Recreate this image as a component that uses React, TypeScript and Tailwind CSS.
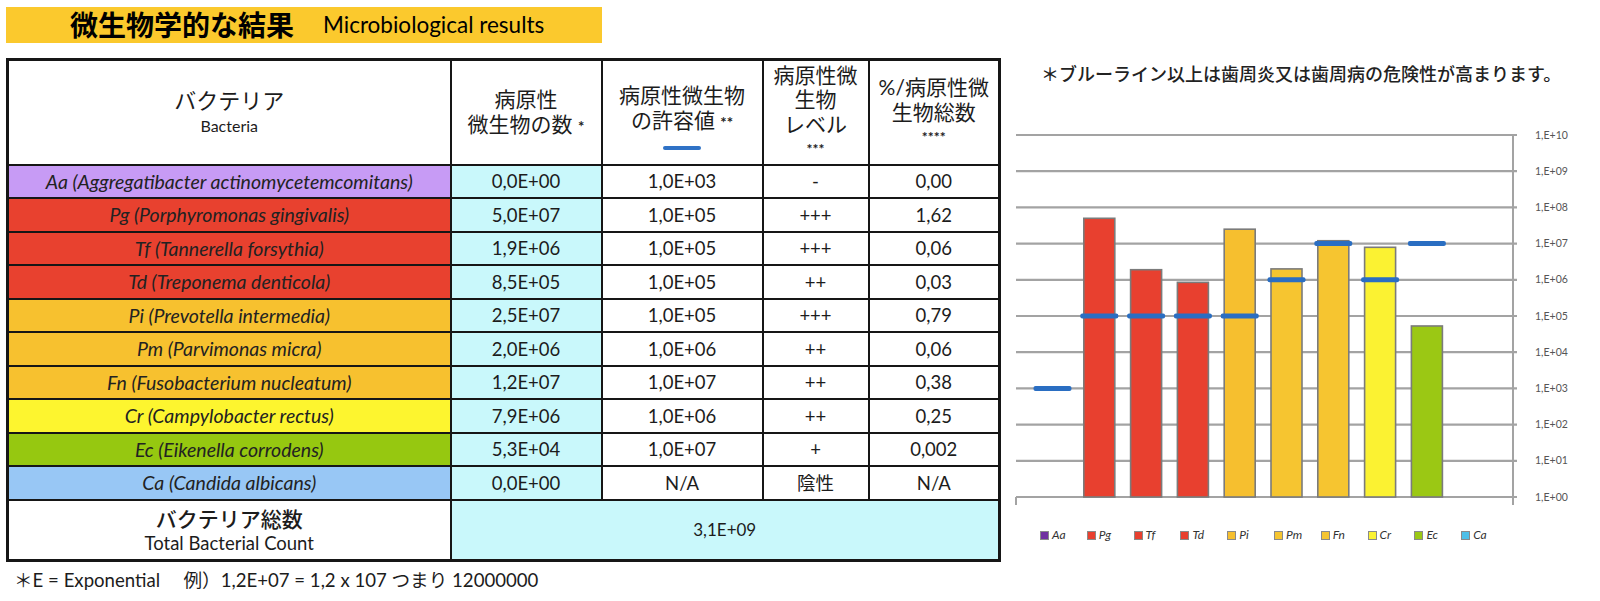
import React from "react";

interface Bacteria {
  abbr: string;
  name: string;
  rowBg: string;
  barColor: string;
  legendColor: string;
  count: string;
  limit: string;
  level: string;
  pct: string;
  value: number;
  threshold: number | null;
}

const bacterias: Bacteria[] = [
  { abbr: "Aa", name: "Aggregatibacter actinomycetemcomitans", rowBg: "bg-[#c79bf5]", barColor: "#7030a0", legendColor: "bg-[#7030a0]", count: "0,0E+00", limit: "1,0E+03", level: "-", pct: "0,00", value: 0, threshold: 1e3 },
  { abbr: "Pg", name: "Porphyromonas gingivalis", rowBg: "bg-[#e8412f]", barColor: "#e8402f", legendColor: "bg-[#e8402f]", count: "5,0E+07", limit: "1,0E+05", level: "+++", pct: "1,62", value: 5e7, threshold: 1e5 },
  { abbr: "Tf", name: "Tannerella forsythia", rowBg: "bg-[#e8412f]", barColor: "#e8402f", legendColor: "bg-[#e8402f]", count: "1,9E+06", limit: "1,0E+05", level: "+++", pct: "0,06", value: 1.9e6, threshold: 1e5 },
  { abbr: "Td", name: "Treponema denticola", rowBg: "bg-[#e8412f]", barColor: "#e8402f", legendColor: "bg-[#e8402f]", count: "8,5E+05", limit: "1,0E+05", level: "++", pct: "0,03", value: 8.5e5, threshold: 1e5 },
  { abbr: "Pi", name: "Prevotella intermedia", rowBg: "bg-[#f7c12f]", barColor: "#f6bf2f", legendColor: "bg-[#f6bf2f]", count: "2,5E+07", limit: "1,0E+05", level: "+++", pct: "0,79", value: 2.5e7, threshold: 1e5 },
  { abbr: "Pm", name: "Parvimonas micra", rowBg: "bg-[#f7c12f]", barColor: "#f6c530", legendColor: "bg-[#f6c530]", count: "2,0E+06", limit: "1,0E+06", level: "++", pct: "0,06", value: 2e6, threshold: 1e6 },
  { abbr: "Fn", name: "Fusobacterium nucleatum", rowBg: "bg-[#f7c12f]", barColor: "#f6c530", legendColor: "bg-[#f6c530]", count: "1,2E+07", limit: "1,0E+07", level: "++", pct: "0,38", value: 1.2e7, threshold: 1e7 },
  { abbr: "Cr", name: "Campylobacter rectus", rowBg: "bg-[#fdf52f]", barColor: "#fbf232", legendColor: "bg-[#fbf232]", count: "7,9E+06", limit: "1,0E+06", level: "++", pct: "0,25", value: 7.9e6, threshold: 1e6 },
  { abbr: "Ec", name: "Eikenella corrodens", rowBg: "bg-[#96c810]", barColor: "#9bc814", legendColor: "bg-[#9bc814]", count: "5,3E+04", limit: "1,0E+07", level: "+", pct: "0,002", value: 5.3e4, threshold: 1e7 },
  { abbr: "Ca", name: "Candida albicans", rowBg: "bg-[#98c7f5]", barColor: "#4dbfe8", legendColor: "bg-[#4dbfe8]", count: "0,0E+00", limit: "N/A", level: "陰性", pct: "N/A", value: 0, threshold: null },
];

// chart geometry (px inside the chart box, box starts at x=1000)
const GRID_TOP = 49;
const GRID_STEP = 36.2;
const GRID_LEFT = 16;
const GRID_RIGHT = 513;
const GRID_BOTTOM = GRID_TOP + GRID_STEP * 10;
const yOf = (v: number) => GRID_TOP + GRID_STEP * (10 - Math.log10(v));
const centerOf = (i: number) => 52.5 + 46.8 * i;

const cell = "border-2 border-[#161616] text-center p-0";

const Chart = () => {
  const ticks = Array.from({ length: 11 }, (_, k) => 10 - k);
  return (
    <svg width={600} height={420} className="block">
      {ticks.map((k) => {
        const y = GRID_TOP + GRID_STEP * (10 - k);
        return (
          <g key={k}>
            <line x1={GRID_LEFT} x2={GRID_RIGHT + 4} y1={y} y2={y} stroke="#a3a3a3" strokeWidth={2.2} />
            <text x={535} y={y + 3.5} fontSize={10.5} fill="#555" fontFamily="Lato, sans-serif">
              {`1,E+${String(k).padStart(2, "0")}`}
            </text>
          </g>
        );
      })}
      <line x1={GRID_RIGHT} x2={GRID_RIGHT} y1={GRID_TOP} y2={GRID_BOTTOM + 8} stroke="#a3a3a3" strokeWidth={2} />
      <line x1={GRID_LEFT} x2={GRID_LEFT} y1={GRID_BOTTOM} y2={GRID_BOTTOM + 8} stroke="#a3a3a3" strokeWidth={2} />
      {bacterias.map((b, i) =>
        b.value > 1 ? (
          <rect
            key={b.abbr}
            x={centerOf(i) - 15.5}
            y={yOf(b.value)}
            width={31}
            height={GRID_BOTTOM - yOf(b.value)}
            fill={b.barColor}
            stroke="#7b7b7b"
            strokeWidth={1.6}
          />
        ) : null
      )}
      {bacterias.map((b, i) =>
        b.threshold ? (
          <rect
            key={b.abbr + "-t"}
            x={centerOf(i) - 19}
            y={yOf(b.threshold) - 2.5}
            width={38}
            height={5}
            rx={2}
            fill="#2a6ec2"
          />
        ) : null
      )}
    </svg>
  );
};

const App = () => {
  return (
    <div className="w-[1600px] h-[601px] bg-white flex overflow-hidden font-[Lato,'Noto_Sans_CJK_JP',sans-serif] text-[#1c1c1c]">
      {/* left: title + table */}
      <div className="w-[1000px] pl-[6px] pt-[7px]">
        <div className="w-[596px] h-[36px] bg-[#fbc92d] flex items-center pl-[64px] gap-[29px]">
          <span className="text-[28px] font-bold leading-none text-black">微生物学的な結果</span>
          <span className="text-[22.5px] leading-none text-black">Microbiological results</span>
        </div>

        <table className="mt-[15px] w-[992px] table-fixed border-collapse border-[3px] border-[#161616]">
          <colgroup>
            <col className="w-[443px]" />
            <col className="w-[151px]" />
            <col className="w-[161px]" />
            <col className="w-[106px]" />
            <col className="w-[131px]" />
          </colgroup>
          <thead>
            <tr className="h-[105px]">
              <th className={`${cell} font-normal`}>
                <div className="text-[22px] leading-[28px]">バクテリア</div>
                <div className="text-[16px] leading-[22px]">Bacteria</div>
              </th>
              <th className={`${cell} font-normal text-[21px] leading-[25px]`}>
                <div>病原性</div>
                <div>
                  微生物の数 <span className="text-[15px] font-bold">*</span>
                </div>
              </th>
              <th className={`${cell} font-normal text-[21px] leading-[25px]`}>
                <div className="pt-[8px]">病原性微生物</div>
                <div>
                  の許容値 <span className="text-[15px] font-bold">**</span>
                </div>
                <div className="mx-auto mt-[11px] w-[38px] h-[4px] rounded-sm bg-[#2f72c6]" />
              </th>
              <th className={`${cell} font-normal text-[21px] leading-[24.5px]`}>
                <div>病原性微</div>
                <div>生物</div>
                <div>レベル</div>
                <div className="text-[14px] font-bold leading-[26px]">***</div>
              </th>
              <th className={`${cell} font-normal text-[21px] leading-[25px]`}>
                <div>%/病原性微</div>
                <div>生物総数</div>
                <div className="text-[14px] font-bold leading-[26px]">****</div>
              </th>
            </tr>
          </thead>
          <tbody>
            {bacterias.map((b) => (
              <tr key={b.abbr} className="h-[33.5px] text-[18.5px] leading-none">
                <td className={`${cell} ${b.rowBg} italic text-[#222] text-[19.5px]`}>
                  {b.abbr} ({b.name})
                </td>
                <td className={`${cell} bg-[#c9f8fb]`}>{b.count}</td>
                <td className={cell}>{b.limit}</td>
                <td className={cell}>{b.level}</td>
                <td className={cell}>{b.pct}</td>
              </tr>
            ))}
            <tr className="h-[61px]">
              <td className={cell}>
                <div className="text-[21px] leading-[27px] font-medium">バクテリア総数</div>
                <div className="text-[18.5px] leading-[22px]">Total Bacterial Count</div>
              </td>
              <td colSpan={4} className={`${cell} bg-[#c9f8fb] text-[17px]`}>
                3,1E+09
              </td>
            </tr>
          </tbody>
        </table>

        <div className="mt-[7px] pl-[8px] text-[18.6px] leading-[22px] whitespace-pre">
          ＊E = Exponential　 例）1,2E+07 = 1,2 x 107 つまり 12000000
        </div>
      </div>

      {/* right: chart */}
      <div className="flex-1 pt-[62px]">
        <div className="pl-[41px] text-[18px] leading-[24px] h-[24px] font-medium text-[#222] whitespace-nowrap">
          ＊ブルーライン以上は歯周炎又は歯周病の危険性が高まります。
        </div>
        <div className="h-[492px]">
          <Chart />
          <div className="mt-[22px] pl-[40px] flex items-center h-[14px]">
            {bacterias.map((b) => (
              <div key={b.abbr} className="w-[46.8px] flex items-center gap-[3px]">
                <span className={`w-[9px] h-[9px] border border-[#8a8a8a] ${b.legendColor}`} />
                <span className="text-[12px] italic leading-none text-[#333]">{b.abbr}</span>
              </div>
            ))}
          </div>
        </div>
      </div>
    </div>
  );
};

export default App;
